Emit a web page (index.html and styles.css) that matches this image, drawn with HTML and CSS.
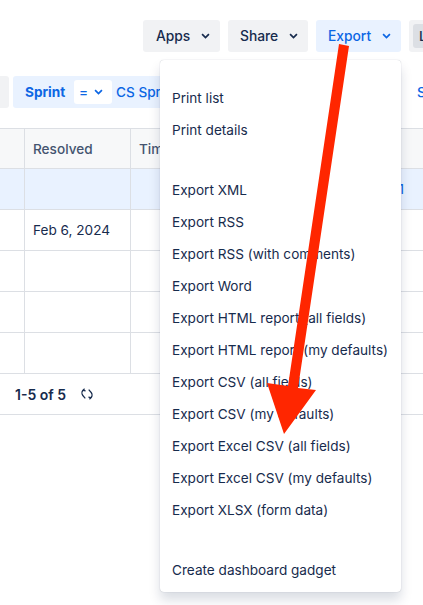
FILE: index.html
```html
<!DOCTYPE html>
<html lang="en">
<head>
    <meta charset="UTF-8">
    <title>Issues - Export</title>
    <link rel="stylesheet" href="styles.css">
</head>
<body>
    <!-- Top Buttons -->
    <div class="toolbar">
        <button class="tool-btn">Apps
            <svg class="chevron" viewBox="0 0 10 6"><path d="M1.2 1 5 4.8 8.800 1"/></svg>
        </button>
        <button class="tool-btn">Share
            <svg class="chevron" viewBox="0 0 10 6"><path d="M1.2 1 5 4.8 8.800 1"/></svg>
        </button>
        <button class="tool-btn active">Export
            <svg class="chevron" viewBox="0 0 10 6"><path d="M1.2 1 5 4.8 8.800 1"/></svg>
        </button>
        <div class="tool-group"><span class="tool-chip">L</span></div>
    </div>

    <!-- Filter Row -->
    <div class="filters">
        <div class="filter-stub"></div>
        <div class="filter-chip">
            <span class="filter-name">Sprint</span>
            <span class="filter-op">=
                <svg class="chevron" viewBox="0 0 10 6"><path d="M1.2 1 5 4.8 8.800 1"/></svg>
            </span>
            <span class="filter-value">CS Sprint</span>
        </div>
        <span class="filter-link">S</span>
    </div>

    <!-- Issue Table -->
    <div class="issues">
        <div class="row head">
            <div class="cell"></div>
            <div class="cell">Resolved</div>
            <div class="cell">Time</div>
        </div>
        <div class="row selected">
            <div class="cell"></div>
            <div class="cell"></div>
            <div class="cell count">1</div>
        </div>
        <div class="row">
            <div class="cell"></div>
            <div class="cell">Feb 6, 2024</div>
            <div class="cell"></div>
        </div>
        <div class="row">
            <div class="cell"></div>
            <div class="cell"></div>
            <div class="cell"></div>
        </div>
        <div class="row">
            <div class="cell"></div>
            <div class="cell"></div>
            <div class="cell"></div>
        </div>
        <div class="row">
            <div class="cell"></div>
            <div class="cell"></div>
            <div class="cell"></div>
        </div>
    </div>

    <!-- Pagination -->
    <div class="pager">
        <span>1-5 of 5</span>
        <svg class="refresh" viewBox="0 0 12 12">
            <path d="M3.600 .8 1.800 2.400C.6 3.800.7 6.200 1.800 7.500L4.300 10.400"/>
            <path d="M1.800 2.400 4.600 2.800"/>
            <path d="M8.400 11.200 10.200 9.600C11.400 8.200 11.300 5.800 10.200 4.500L7.700 1.600"/>
            <path d="M10.200 9.600 7.400 9.200"/>
        </svg>
    </div>

    <!-- Export Menu -->
    <div class="menu">
        <ul class="menu-group">
            <li>Print list</li>
            <li>Print details</li>
        </ul>
        <ul class="menu-group">
            <li>Export XML</li>
            <li>Export RSS</li>
            <li>Export RSS (with comments)</li>
            <li>Export Word</li>
            <li>Export HTML report (all fields)</li>
            <li>Export HTML report (my defaults)</li>
            <li>Export CSV (all fields)</li>
            <li>Export CSV (my defaults)</li>
            <li>Export Excel CSV (all fields)</li>
            <li>Export Excel CSV (my defaults)</li>
            <li>Export XLSX (form data)</li>
        </ul>
        <ul class="menu-group">
            <li>Create dashboard gadget</li>
        </ul>
    </div>

    <!-- Red annotation arrow -->
    <svg class="arrow" viewBox="0 0 423 605">
        <polygon points="339,44 349,46 298,388 316,390 284,434 267,383 288,386"/>
    </svg>
</body>
</html>
```

FILE: styles.css
```css
/* General Styling */
body {
    font-family: 'Inter', 'Liberation Sans', sans-serif;
    font-size: 13.6px;
    color: #172B4D;
    background-color: #fff;
    margin: 0;
    width: 423px;
    height: 605px;
    overflow: hidden;
    position: relative;
}

.chevron {
    flex: none;
    width: 9px;
    height: 6px;
    fill: none;
    stroke: currentColor;
    stroke-width: 1.9;
}

/* Top Buttons */
.toolbar {
    display: flex;
    gap: 8px;
    padding: 20px 0 0 143px;
    height: 32px;
}

.tool-btn {
    display: flex;
    align-items: center;
    justify-content: space-between;
    flex: none;
    height: 32px;
    padding: 0 10px 0 13px;
    border: 0;
    border-radius: 3px;
    background-color: #F1F2F4;
    color: #172B4D;
    font: 500 13.8px 'Inter', sans-serif;
}

.tool-btn:nth-child(1) { width: 77px; }
.tool-btn:nth-child(2) { width: 80px; padding-left: 12px; }
.tool-btn:nth-child(3) { width: 85px; padding-left: 12px; }

.tool-btn.active {
    background-color: #E9F2FF;
    color: #0C66E4;
}

.tool-group {
    flex: none;
    width: 60px;
    height: 24px;
    padding: 4px;
    border-radius: 3px;
    background-color: #F1F2F4;
}

.tool-chip {
    display: block;
    width: 50px;
    height: 24px;
    padding-left: 6px;
    border-radius: 3px;
    background-color: #DCDFE4;
    font-weight: 500;
    line-height: 24px;
}

/* Filter Row */
.filters {
    display: flex;
    align-items: center;
    height: 32px;
    margin-top: 24px;
}

.filter-stub {
    flex: none;
    width: 9px;
    height: 32px;
    border-radius: 0 3px 3px 0;
    background-color: #F1F2F4;
}

.filter-chip {
    display: flex;
    align-items: center;
    flex: none;
    width: 200px;
    height: 32px;
    margin-left: 4px;
    padding-left: 12px;
    box-sizing: border-box;
    border-radius: 3px;
    background-color: #E9F2FF;
    color: #0C66E4;
    font-weight: 500;
    white-space: nowrap;
}

.filter-name {
    width: 42px;
    font-weight: 700;
}

.filter-op {
    display: flex;
    align-items: center;
    justify-content: space-between;
    flex: none;
    box-sizing: border-box;
    width: 38px;
    height: 24px;
    margin: 0 4px 0 7px;
    padding: 0 9px 0 5px;
    border-radius: 3px;
    background-color: #fff;
}

.filter-link {
    margin-left: 204px;
    color: #0C66E4;
    font-weight: 500;
}

/* Issue Table */
.issues {
    margin-top: 20px;
    border-top: 1px solid #DCDFE4;
}

.row {
    display: grid;
    grid-template-columns: 25px 106px 1fr;
    height: 40px;
    border-bottom: 1px solid #DCDFE4;
}

.row.head {
    height: 39px;
    background-color: #F7F8F9;
    color: #44546F;
    font-weight: 500;
}

.row.selected {
    background-color: #E9F2FF;
}

.cell {
    display: flex;
    align-items: center;
    padding-left: 8px;
    border-right: 1px solid #DCDFE4;
}

.cell:first-child { padding-left: 0; }
.cell:last-child { border-right: 0; }

.cell.count {
    justify-content: flex-end;
    padding-right: 19px;
    color: #0C66E4;
}

/* Pagination */
.pager {
    display: flex;
    align-items: center;
    gap: 15px;
    height: 40px;
    padding-left: 15px;
    border-bottom: 1px solid #DCDFE4;
    font-size: 14px;
    font-weight: 600;
}

.refresh {
    width: 12px;
    height: 12px;
    fill: none;
    stroke: #172B4D;
    stroke-width: 1.2;
}

/* Export Menu */
.menu {
    position: absolute;
    top: 60px;
    left: 160px;
    width: 241px;
    height: 532px;
    box-sizing: border-box;
    padding-top: 22px;
    border-radius: 4px;
    background-color: #fff;
    box-shadow: 0 8px 12px rgba(9, 30, 66, 0.15), 0 0 1px rgba(9, 30, 66, 0.31);
}

.menu-group {
    list-style: none;
    margin: 0 0 28px;
    padding: 0;
}

.menu-group li {
    height: 32px;
    padding-left: 12px;
    line-height: 32px;
    white-space: nowrap;
}

/* Annotation */
.arrow {
    position: absolute;
    top: 0;
    left: 0;
    width: 423px;
    height: 605px;
    fill: #FF2600;
}
```
